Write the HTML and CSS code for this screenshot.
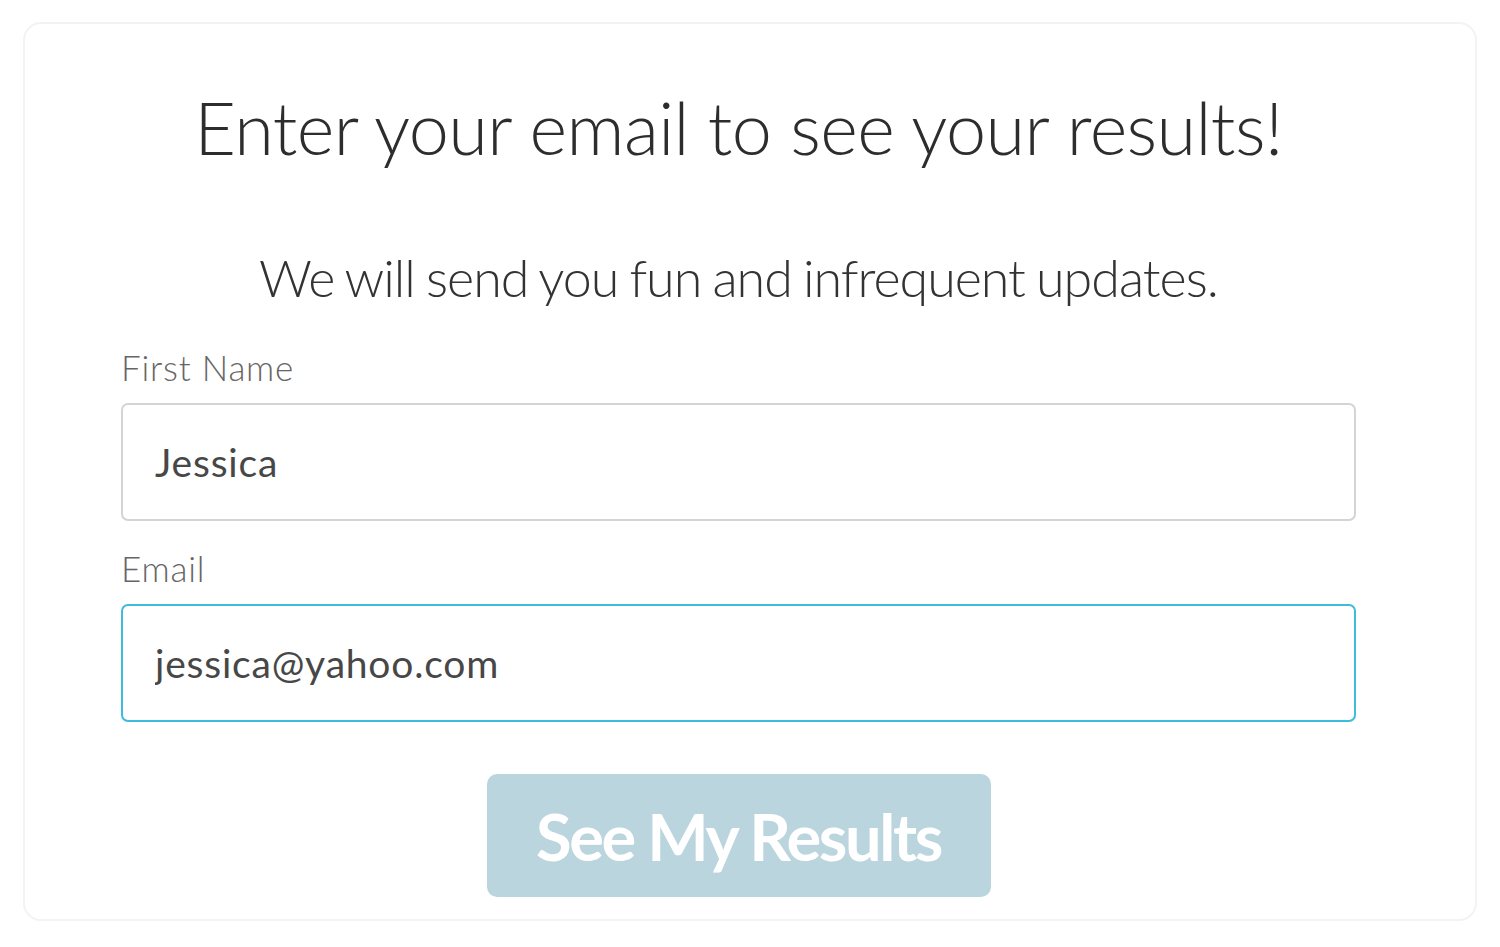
FILE: index.html
```html
<!DOCTYPE html>
<html lang="en">
<head>
    <meta charset="UTF-8">
    <meta name="viewport" content="width=device-width, initial-scale=1.0">
    <title>See Your Results</title>
    <link rel="stylesheet" href="styles.css">
</head>
<body>

    <div class="card">
        <h1>Enter your email to see your results!</h1>

        <p class="subtitle">We will send you fun and infrequent updates.</p>

        <form class="signup-form">
            <label for="first-name">First Name</label>
            <input type="text" id="first-name" value="Jessica">

            <label for="email">Email</label>
            <input type="email" id="email" class="focused" value="jessica@yahoo.com">

            <div class="button-container">
                <button type="button">See My Results</button>
            </div>
        </form>
    </div>

</body>
</html>
```

FILE: styles.css
```css
body {
    font-family: Lato, "Open Sans", sans-serif;
    margin: 0;
    background-color: #fff;
}

.card {
    box-sizing: border-box;
    width: 1454px;
    height: 899px;
    margin: 22px 0 0 23px;
    padding: 60px 119px 0 96px;
    border: 2px solid #f3f3f3;
    border-radius: 18px;
    background-color: #fff;
}

h1 {
    margin: 0;
    text-align: center;
    font-size: 72px;
    font-weight: 300;
    line-height: 86px;
    letter-spacing: -0.6px;
    color: #2d2d2d;
}

.subtitle {
    margin: 76px 0 0;
    text-align: center;
    font-size: 52px;
    font-weight: 300;
    line-height: 62px;
    letter-spacing: -1px;
    word-spacing: -2px;
    color: #333;
}

.signup-form {
    margin-top: 41px;
}

label {
    display: block;
    font-size: 35px;
    font-weight: 300;
    line-height: 37px;
    letter-spacing: 0.8px;
    color: #666;
}

input[type="text"], input[type="email"] {
    display: block;
    box-sizing: border-box;
    width: 100%;
    height: 118px;
    margin: 17px 0 29px;
    padding: 0 32px;
    border: 2px solid #d4d4d4;
    border-radius: 7px;
    font-family: Lato, "Open Sans", sans-serif;
    font-size: 39px;
    letter-spacing: 0.8px;
    color: #474747;
    outline: none;
}

input.focused {
    border-color: #3dbcdc;
    margin-bottom: 0;
}

.button-container {
    margin-top: 52px;
    display: flex;
    justify-content: center;
}

button {
    width: 504px;
    height: 123px;
    border: none;
    border-radius: 10px;
    background-color: #bbd5df;
    color: #fff;
    font-family: Lato, "Open Sans", sans-serif;
    font-size: 65px;
    font-weight: 700;
    letter-spacing: -2.4px;
    cursor: pointer;
}
```
